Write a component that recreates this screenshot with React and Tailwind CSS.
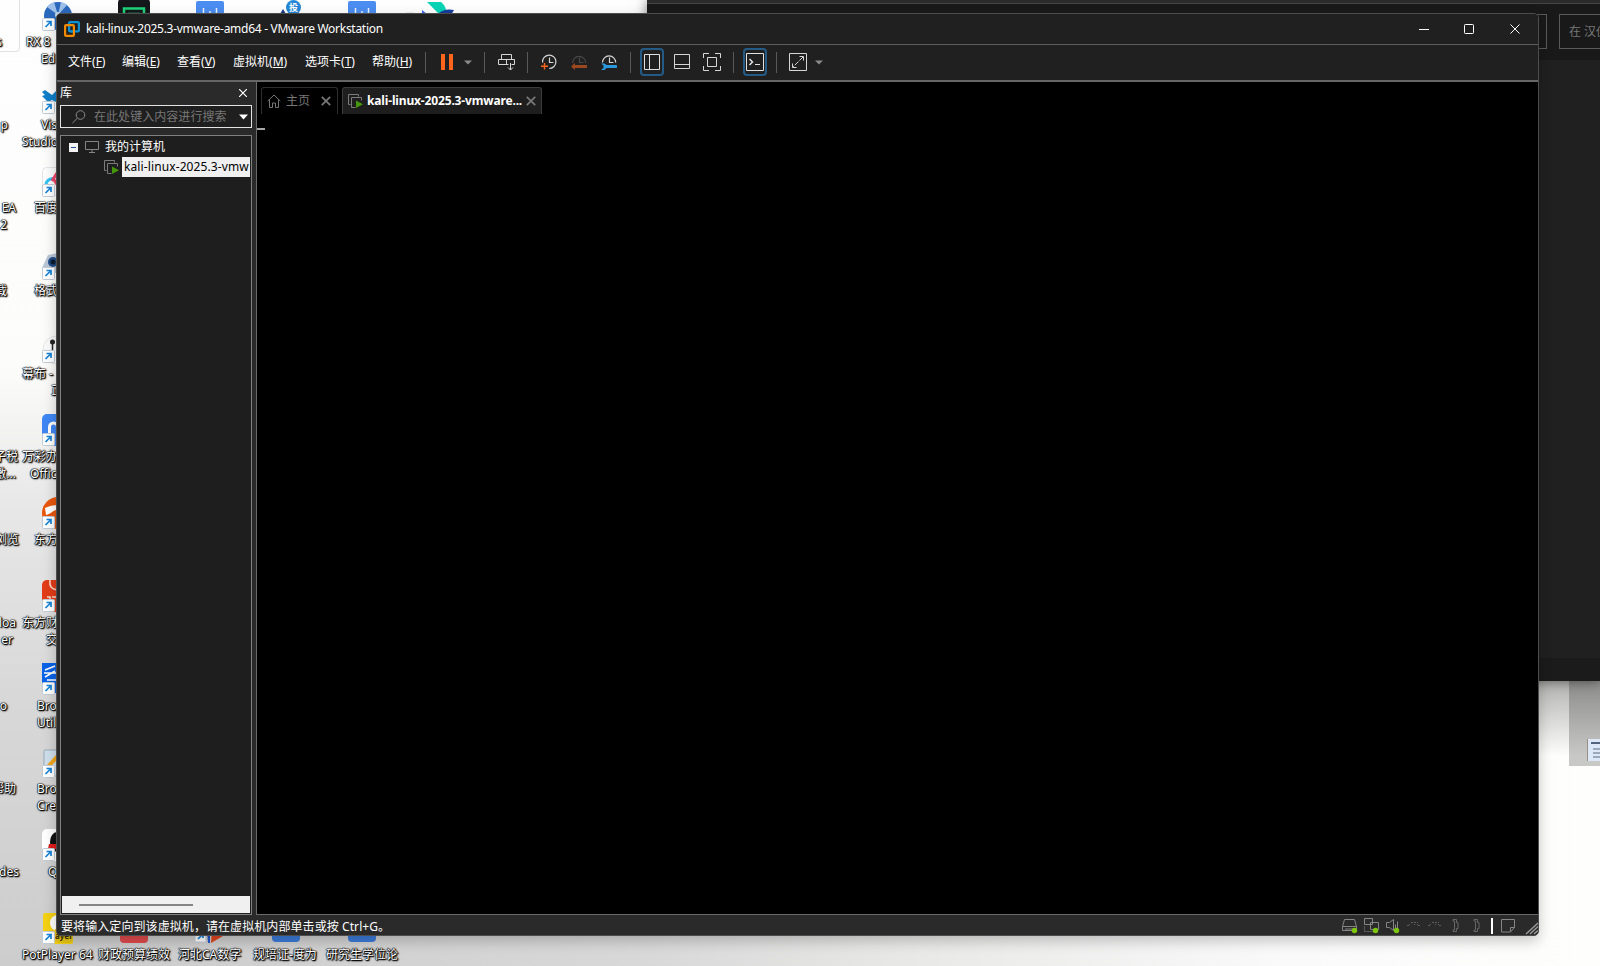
import React from 'react';

const LABEL =
  'absolute whitespace-pre text-[12px] leading-[17px] text-white [text-shadow:0_0_1px_#000,0_0_1px_#000,0_0_1px_#000,1px_1px_1px_#000,1px_1px_2px_#222,0_0_2px_#333]';

const ROW_HEIGHT = 83;

// shortcuts that stick out to the left of the window
const SHORTCUTS = [
  { lines: [['RX 8', 26], ['Ed', 41]], icon: <><circle cx="16" cy="15" r="14" fill="#2b69be" /><path d="M16 14L5 6a14 14 0 0 1 7-5zM16 14L19 1a14 14 0 0 1 6 3z" fill="#9fc0e8" /><circle cx="16" cy="14" r="3" fill="#c4d8ef" /></> },
  { lines: [['Vis', 41], ['Studio', 22]], icon: <path d="M0 8l3-2 7 5 6-6v14l-6-3-4 2L0 12l3-1z" fill="#0e7fc9" /> },
  { lines: [['百度', 34]], icon: <><rect x=".5" y=".5" width="28" height="28" rx="4" fill="#fdfdfd" stroke="#e4e4e4" /><path d="M4 18c0-5 5-7 8-6" fill="none" stroke="#35c3f3" strokeWidth="3" /><path d="M10 14l5-8M11 11l5 8" stroke="#ee4466" strokeWidth="3" /></> },
  { lines: [['格式', 34]], icon: <><path d="M0 18L6 5l10-2v20H0z" fill="#b9c6d6" /><circle cx="11" cy="12" r="5" fill="#224d86" /><circle cx="11" cy="12" r="2.500" fill="#0c1c33" /></> },
  { lines: [['幕布 -', 22], ['正', 51]], icon: <><circle cx="15" cy="17" r="14" fill="#fbfbfb" stroke="#e5e5e5" /><circle cx="10.500" cy="9" r="2.500" fill="#222" /><path d="M10.500 9v9" stroke="#222" strokeWidth="1.500" /></> },
  { lines: [['万彩办', 22], ['Offic', 30]], icon: <><rect y="-2" width="30" height="32" rx="5" fill="#3f87f5" /><path d="M7.500 19V11a4 4 0 0 1 8 0v8" fill="none" stroke="#fff" strokeWidth="3" /></> },
  { lines: [['东方', 34]], icon: <><circle cx="16" cy="14" r="16" fill="#e9570c" /><path d="M3 9c4-2 8-3 14-3v4c-6 1-8 5-13 6z" fill="#fff" /></> },
  { lines: [['东方财', 22], ['交', 46]], icon: <><rect y="-2" width="30" height="32" rx="5" fill="#e23d18" /><path d="M8-2c-1 7 2 9 7 10M5 15h3v3M10 15h5" fill="none" stroke="#ffd6c8" strokeWidth="1.500" /></> },
  { lines: [['Bro', 37], ['Util', 37]], icon: <><rect y="-2" width="30" height="30" fill="#0a63e8" /><path d="M3 5l10-4M2 8h12M3 12l10-6M5 15h9" stroke="#fff" strokeWidth="1.500" /></> },
  { lines: [['Bro', 37], ['Cre', 37]], icon: <><rect x="2" y="2" width="24" height="26" rx="1" fill="#cfdfec" stroke="#9aabb9" /><path d="M5 17l9-10 3 3-9 9z" fill="#f2a71b" /></> },
  { lines: [['Q', 48]], icon: <><rect y="-2" width="30" height="32" rx="5" fill="#fff" /><ellipse cx="15" cy="11" rx="7" ry="10" fill="#111" /><path d="M7 13h10v5H6z" fill="#e01b1b" /></> },
  { lines: [['PotPlayer 64', 22]], icon: <><rect x="1" y="-1" width="30" height="31" rx="2" fill="#f5d214" /><circle cx="16" cy="9" r="8" fill="#fff" /></> },
];

// right aligned tails of the first icon column: [text, row, line, right edge]
const TAILS = [
  ['s', 0, 0, 2],
  ['p', 1, 0, 8],
  ['EA', 2, 0, 16],
  ['2', 2, 1, 7],
  ['载', 3, 0, 7],
  ['子税', 5, 0, 18],
  ['激...', 5, 1, 16],
  ['浏览', 6, 0, 19],
  ['loa', 7, 0, 16],
  ['er', 7, 1, 13],
  ['o', 8, 0, 7],
  ['帮助', 9, 0, 16],
  ['des', 10, 0, 19],
];

const BOTTOM_LABELS = [
  ['财政预算绩效', 98],
  ['河北CA数字', 178],
  ['规培证-度为', 253],
  ['研究生学位论', 326],
];

const MENUS = [
  ['文件', 'F', 54],
  ['编辑', 'E', 55],
  ['查看', 'V', 56],
  ['虚拟机', 'M', 72],
  ['选项卡', 'T', 67],
  ['帮助', 'H', 42],
];

function Desktop() {
  return (
    <div className="absolute inset-0 overflow-hidden bg-[linear-gradient(180deg,#fefefe_0%,#fcfcfb_38%,#e8e8e8_52%,#d8d8d8_72%,#cdcdcd_100%)]">
      <div className="absolute bottom-0 right-0 h-[500px] w-[1540px] bg-[linear-gradient(90deg,#cbcbcb_0%,#d8d8d8_38%,#e8e8e7_55%,#fafafa_80%,#fefefd_100%)]" />
      <div className="absolute -left-2 -top-2 h-[60px] w-[28px] rounded border border-[#e2e2e2]" />

      {SHORTCUTS.map((s, i) => (
        <div key={i}>
          <svg className="absolute left-[42px] h-[30px] w-8 overflow-visible" style={{ top: 1 + i * ROW_HEIGHT }} viewBox="0 0 32 30">
            {s.icon}
            <rect x=".5" y="17.500" width="12" height="12" rx="1" fill="#fff" stroke="#c3cbd6" />
            <path d="M3.500 26L8.500 21M4.500 20.500h4.500v4.500" fill="none" stroke="#1583d8" strokeWidth="1.700" />
          </svg>
          {s.lines.map(([text, left], n) => (
            <span key={text} className={LABEL} style={{ left, top: 33 + i * ROW_HEIGHT + n * 17 }}>{text}</span>
          ))}
        </div>
      ))}
      {TAILS.map(([text, row, line, right]) => (
        <span key={text + row} className={LABEL} style={{ right: 1600 - right, top: 33 + row * ROW_HEIGHT + line * 17 }}>{text}</span>
      ))}

      {/* icons peeking out above the window */}
      <svg className="absolute left-[118px] top-0 h-4 w-8" viewBox="0 0 32 16">
        <rect y="-3" width="32" height="30" rx="6" fill="#15171a" />
        <path d="M6 16V8.500h20V16M10 14h12" fill="none" stroke="#1ed37a" strokeWidth="2.500" />
      </svg>
      {[196, 348].map((left) => (
        <svg key={left} className="absolute top-0 h-4 w-7" style={{ left }} viewBox="0 0 28 16">
          <rect y="1" width="28" height="20" rx="2" fill="#4b8df0" />
          <path d="M7.500 8v8M14 11v5M20.500 8v8" stroke="#e8f1ff" strokeWidth="1.500" />
        </svg>
      ))}
      <svg className="absolute left-[278px] top-0 h-4 w-6" viewBox="0 0 24 16">
        <path d="M2 14l3-5 3 5z" fill="#193a86" />
        <circle cx="15.500" cy="7.500" r="7.500" fill="#2487d8" />
        <text x="15.500" y="11" fontSize="9" fontWeight="700" fill="#fff" textAnchor="middle" fontFamily="Noto Sans CJK SC">投</text>
      </svg>
      <svg className="absolute left-[404px] top-0 h-4 w-[52px]" viewBox="0 0 52 16">
        <path d="M2 13h8" stroke="#e3e6f0" strokeWidth="1.500" />
        <path d="M18 10l5 4h-5z" fill="#3566f0" />
        <path d="M23 2h14q4 3 5 8l-7 4z" fill="#08d4b5" />
        <path d="M34 14q6-6 16-4l-3 5z" fill="#153d9c" />
      </svg>

      {/* bottom row */}
      <span className="absolute left-[55px] top-[929px] h-[14px] w-[18px] rounded-b-sm bg-[#e9c717] text-[8px] font-bold leading-[14px] text-[#3b2e0a]">ayer</span>
      <div className="absolute left-[120px] top-[929px] h-[14px] w-7 rounded-b-sm bg-[#e04a4c]" />
      <svg className="absolute left-[194px] top-[930px] h-[13px] w-[30px]" viewBox="0 0 30 13">
        <rect x="1" y="-2" width="11" height="14" fill="#fff" stroke="#c3cbd6" />
        <path d="M4 9l4-4M5 4h4v4" fill="none" stroke="#1583d8" strokeWidth="1.700" />
        <path d="M13 0h3v13h-2z" fill="#2456cf" />
        <path d="M18 0h8l3 6-12 7z" fill="#e2441e" />
      </svg>
      <div className="absolute left-[272px] top-[929px] h-[13px] w-7 rounded-b-sm bg-[#3b7bd9]" />
      <div className="absolute left-[348px] top-[929px] h-[13px] w-7 rounded-b-sm bg-[#3b7bd9]" />
      {BOTTOM_LABELS.map(([text, left]) => (
        <span key={text} className={LABEL} style={{ left, top: 946 }}>{text}</span>
      ))}
    </div>
  );
}

function BackWindow() {
  return (
    <>
      <div className="absolute left-[1569px] top-[681px] h-[85px] w-[31px] bg-[#c8c8c6]" />
      <div className="absolute left-[1538px] top-[681px] h-[75px] w-[62px] bg-linear-to-b from-black/30 to-transparent" />
      <div className="absolute left-[1587px] top-[739px] flex h-[22px] w-[13px] flex-col gap-[2px] border-l border-[#9a8f80] bg-[#dce8f7] pl-[3px] pt-[3px]">
        <div className="h-[2px] shrink-0 bg-[#50627c]" />
        <div className="ml-[2px] mt-[2px] h-[2px] shrink-0 bg-[#9aa9bb]" />
        <div className="ml-[2px] h-[2px] shrink-0 bg-[#9aa9bb]" />
        <div className="ml-[2px] h-[2px] shrink-0 bg-[#9aa9bb]" />
      </div>
      <div className="absolute left-[647px] top-0 flex h-[681px] w-[953px] flex-col bg-[#202020] shadow-[0_0_12px_rgba(0,0,0,0.5)]">
        <div className="h-1 shrink-0 border-b border-[#444] bg-[#2b2b2b]" />
        <div className="flex h-14 shrink-0 overflow-hidden bg-[#191919] pt-[10px]">
          <div className="h-[35px] w-[900px] shrink-0 border border-[#5a5a5a]" />
          <div className="ml-3 h-[35px] w-[60px] shrink-0 overflow-hidden whitespace-nowrap border border-[#5a5a5a] pl-[9px] text-[12px] leading-[34px] text-[#777]">在 汉仪</div>
        </div>
        <div className="grow" />
        <div className="h-[23px] bg-[#1b1b1b]" />
      </div>
    </>
  );
}

function TitleBar() {
  return (
    <div className="flex h-[31px] shrink-0 items-center border-b border-[#5e5e5e] bg-[#202020] pl-[7px]">
      <svg className="h-4 w-4" viewBox="0 0 16 16" fill="none" strokeWidth="2.200">
        <rect x="5.100" y="1.100" width="9.800" height="9.300" rx="1" stroke="#0d91d4" />
        <rect x="1.100" y="4.100" width="8.800" height="10.800" rx="1" stroke="#f38b00" />
        <path d="M5.100 8.500V6.500M7 10.400h1.500" stroke="#0d91d4" />
      </svg>
      <span className="ml-[6px] w-[297px] whitespace-nowrap text-[12px] tracking-[-0.280px] text-white">kali-linux-2025.3-vmware-amd64 - VMware Workstation</span>
      <svg className="ml-auto mr-[17px] h-[10px] w-[102px]" viewBox="0 0 102 10" fill="none" stroke="#fff">
        <path d="M0 5.500h10" />
        <rect x="45.500" y=".5" width="9" height="9" rx=".8" />
        <path d="M91.500.5l9 9M100.500.5l-9 9" />
      </svg>
    </div>
  );
}

function Separator() {
  return <div className="mt-px h-[21px] w-px shrink-0 bg-[#595959]" />;
}

function Caret() {
  return (
    <svg className="-mb-px h-[5px] w-2 shrink-0" viewBox="0 0 8 5"><path d="M0 .5h8L4 4.500z" fill="#8a8a8a" /></svg>
  );
}

function Toggle({ children }) {
  return (
    <div className="ml-[9px] flex h-[28px] w-[24px] shrink-0 items-center justify-center rounded-sm border-2 border-[#235b86]">
      {children}
    </div>
  );
}

function MenuBar() {
  return (
    <div className="flex h-[37px] shrink-0 items-center border-b-2 border-[#666] bg-[#202020] pb-px pl-[11px]">
      {MENUS.map(([name, key, width]) => (
        <span key={key} className="-mt-px shrink-0 whitespace-nowrap text-[12px] leading-4 text-white" style={{ width }}>
          {name}(<u className="underline-offset-1">{key}</u>)
        </span>
      ))}
      <div className="ml-[11px]"><Separator /></div>
      <svg className="ml-[15px] h-4 w-3" viewBox="0 0 12 16"><path d="M0 0h4v16H0zM8 0h4v16H8z" fill="#ff661c" /></svg>
      <div className="ml-[11px] flex"><Caret /></div>
      <div className="ml-3"><Separator /></div>
      <svg className="-mb-px ml-[13px] h-[17px] w-[17px]" viewBox="0 0 17 17" fill="none" stroke="#d6d6d6">
        <path d="M3.500 5.500v-5h10v5M.5 5.500h16v5h-3M.5 5.500v5h10M8.500 5.500v5M12.500 9v7M10 13.500l2.500 2.500 2.500-2.500" />
      </svg>
      <div className="ml-3"><Separator /></div>
      <svg className="ml-[13px] h-4 w-4" viewBox="0 0 16 16">
        <g fill="none" stroke="#d6d6d6" strokeWidth="1.200"><path d="M1.600 8.500a6.700 6.700 0 1 1 6.600 6" /><path d="M8.500 3.500v5h4" /></g>
        <path d="M0 12.200h7M3.500 9v6.500" stroke="#ff661c" strokeWidth="1.400" />
      </svg>
      <svg className="ml-[14px] h-4 w-4" viewBox="0 0 16 16">
        <g fill="none" stroke="#484848" strokeWidth="1.200"><path d="M1.500 9a6.600 6.600 0 1 1 13.200 0" /><path d="M8.500 3.500v5h4" /></g>
        <path d="M0 12.500l4-3.500v2h12v3H4v2z" fill="#9b4720" />
      </svg>
      <svg className="ml-[14px] h-4 w-4" viewBox="0 0 16 16">
        <g fill="none" stroke="#d6d6d6" strokeWidth="1.200"><path d="M1.500 8.500a6.600 6.600 0 1 1 13.200 0" /><path d="M8.500 3.500v5h4" /></g>
        <path d="M0 9.500h3.500L5.500 11H15a1.200 1.200 0 0 1 0 3H5.500l-2 2H0l2.500-2v-2.500z" fill="#2c98dc" />
      </svg>
      <div className="ml-[13px]"><Separator /></div>
      <Toggle>
        <svg className="h-4 w-4 shrink-0" viewBox="0 0 16 16" fill="none" stroke="#e2e2e2"><path d="M.5.5h15v15H.5zM5.500.5v15" /></svg>
      </Toggle>
      <svg className="ml-[10px] h-4 w-4" viewBox="0 0 16 16" fill="none" stroke="#d6d6d6"><path d="M.5.5h15v14H.5zM.5 10.500h15" /></svg>
      <svg className="ml-[13px] h-[18px] w-[18px]" viewBox="0 0 18 18" fill="none" stroke="#d6d6d6">
        <path d="M.5 5V.5H6M12 .5h5.500V5M17.500 13v4.500H12M6 17.500H.5V13M4.500 4.500h9v9h-9z" />
      </svg>
      <div className="ml-3"><Separator /></div>
      <Toggle>
        <svg className="h-[18px] w-[18px] shrink-0" viewBox="0 0 18 18" fill="none" stroke="#e2e2e2">
          <path d="M.5.5h17v17H.5zM9 11.500h5" />
          <path d="M3.500 6l3 3-3 3" strokeWidth="1.500" />
        </svg>
      </Toggle>
      <div className="ml-[9px]"><Separator /></div>
      <svg className="ml-3 h-[18px] w-[18px]" viewBox="0 0 18 18" fill="none" stroke="#d6d6d6">
        <path d="M.5.5h17v17H.5zM10.500 3.500h4v4M3.500 10.500v4h4" />
        <path d="M14 4L4 14" strokeDasharray="5 1.500" />
      </svg>
      <div className="ml-2 flex"><Caret /></div>
    </div>
  );
}

function VmIcon() {
  return (
    <svg className="h-[14px] w-[15px] shrink-0" viewBox="0 0 15 14">
      <path d="M2.500 10.500h-2V.5h10v2" fill="none" stroke="#7b7b7b" />
      <path d="M7.500 13.500h-4v-10h10v3" fill="none" stroke="#7b7b7b" />
      <path d="M8 6.500l7 3.700L8 14z" fill="#45960b" />
    </svg>
  );
}

function Library() {
  return (
    <div className="flex w-[199px] shrink-0 flex-col bg-[#2a2a2a] pl-[3px]">
      <div className="flex h-[23px] shrink-0 items-center pb-[2px] text-[12px] text-white">
        <span>库</span>
        <svg className="ml-auto mr-[9px] h-2 w-2" viewBox="0 0 8 8"><path d="M0 0l8 8M8 0L0 8" stroke="#fff" strokeWidth="1.200" /></svg>
      </div>
      <div className="flex h-[23px] w-[192px] shrink-0 items-center border border-[#e4e4e4] bg-[#1f1f1f] pl-[11px] pr-[3px]">
        <svg className="h-[14px] w-[14px] shrink-0" viewBox="0 0 14 14" fill="none" stroke="#8a8a8a"><circle cx="8.500" cy="5" r="4.300" /><path d="M5.300 8.300L.5 13" /></svg>
        <span className="ml-2 whitespace-nowrap text-[12px] text-[#777] tracking-[0.050px]">在此处键入内容进行搜索</span>
        <svg className="ml-auto h-[6px] w-[9px] shrink-0" viewBox="0 0 9 6"><path d="M0 .5h9L4.500 5.500z" fill="#fff" /></svg>
      </div>
      <div className="mt-[7px] flex w-[192px] grow flex-col border border-[#808080] bg-[#1e1e1e]">
        <div className="flex h-[21px] items-center pl-2 pt-px">
          <div className="flex h-[9px] w-[9px] items-center justify-center bg-[#f3f3f3]">
            <div className="h-px w-[5px] bg-[#27509b]" />
          </div>
          <svg className="ml-[7px] h-3 w-[14px]" viewBox="0 0 14 12" fill="none" stroke="#858585"><path d="M.5.5h13v8H.5zM7 8.500v3M4 11.500h6" /></svg>
          <span className="ml-[6px] text-[12px] leading-4 text-white">我的计算机</span>
        </div>
        <div className="flex h-5 items-center pl-[43px]">
          <VmIcon />
          <div className="ml-[3px] mr-px h-5 grow overflow-hidden bg-[#f0f0f0] pl-[2px] text-[12px] leading-5 text-black">
            <span className="block w-[125px] overflow-hidden whitespace-nowrap tracking-[0.110px]">kali-linux-2025.3-vmware-amd64</span>
          </div>
        </div>
        <div className="grow" />
        <div className="mx-px mb-px flex h-[17px] items-center bg-[#f0f0f0] pl-[17px]">
          <div className="h-[2px] w-[114px] bg-[#858585]" />
        </div>
      </div>
    </div>
  );
}

function TabClose() {
  return (
    <svg className="h-[10px] w-[10px] shrink-0" viewBox="0 0 10 10"><path d="M.8.8l8.400 8.400M9.200.8L.8 9.200" stroke="#777" strokeWidth="1.800" /></svg>
  );
}

function Console() {
  return (
    <div className="flex grow flex-col border-b border-l border-[#6a6a6a] bg-black">
      <div className="mt-[5px] flex h-[27px] gap-1 pl-1">
        <div className="flex w-[77px] items-center rounded-t-[3px] border border-b-0 border-[#2e2e2e] pl-[5px]">
          <svg className="h-[14px] w-[14px]" viewBox="0 0 14 14" fill="none" stroke="#777"><path d="M.7 7L7 1l6.300 6M2.500 5.500v8h3V9h3v4.500h3v-8" /></svg>
          <span className="ml-[5px] text-[12px] text-[#777]">主页</span>
          <div className="ml-[11px] flex"><TabClose /></div>
        </div>
        <div className="flex w-[200px] items-center rounded-t-[3px] border border-b-0 border-[#3c3c3c] bg-[#1e1e1e] pl-[5px]">
          <VmIcon />
          <span className="ml-1 w-[156px] whitespace-nowrap text-[12px] font-bold tracking-[-0.150px] text-white">kali-linux-2025.3-vmware...</span>
          <div className="ml-[3px] flex"><TabClose /></div>
        </div>
      </div>
      {/* guest text cursor */}
      <div className="mt-[14px] h-[2px] w-2 bg-[#a8a8a8]" />
    </div>
  );
}

function StatusBar() {
  return (
    <div className="flex h-[20px] shrink-0 items-center bg-[#2a2a2a] pl-1">
      <span className="whitespace-nowrap pt-[3px] text-[12px] leading-4 tracking-[0.080px] text-white">要将输入定向到该虚拟机，请在虚拟机内部单击或按 Ctrl+G。</span>
      <svg className="ml-auto mt-[2px] h-[17px] w-[197px]" viewBox="0 0 197 17" fill="none" stroke="#858585">
        <path d="M3.500 1.500h10l2 7v4H1.500v-4zM1.500 8.500h14M4 11h8" />
        <path d="M23.500.5h8v6h-8zM29.500 4.500h8v7h-8z" fill="#2a2a2a" />
        <path d="M23.500 8.500v5h9" strokeDasharray="1 1" />
        <path d="M45.500 4.500h3l4-3v11l-4-3h-3zM54.500 6.500v6M56.500 3.500v8" />
        <g stroke="#5c5c5c">
          <path d="M70 4.500h2M73 4.500h2M76 4.500h1M66 7.500h2M68 6.500h1M73 6.500h1M76 6.500h1M77 7.500h2" />
          <path d="M91 4.500h2M94 4.500h2M97 4.500h1M87 7.500h2M89 6.500h1M94 6.500h1M97 6.500h1M98 7.500h2" />
        </g>
        <path d="M112 1.500h3.500v3h1.500v6h-1.500v3H112v-1.500h1.500v-9H112zM133 1.500h3.500v3h1.500v6h-1.500v3H133v-1.500h1.500v-9H133z" stroke="#666" />
        <path d="M151 0v16" stroke="#fff" strokeWidth="2" />
        <path d="M160.500 1.500h13v8l-4 4.500h-9zM173.500 9.500h-4v4" />
        <path d="M185 16l12-11M189 16l8-7.500M193 16l4-3.500" stroke="#9a9a9a" strokeWidth="1.400" />
        <g fill="#7cc60d" stroke="none"><circle cx="13.500" cy="12.500" r="2.700" /><circle cx="34.500" cy="12.500" r="2.700" /><circle cx="55.500" cy="12.500" r="2.700" /></g>
      </svg>
    </div>
  );
}

export default function App() {
  return (
    <div className="relative h-[966px] w-[1600px] overflow-hidden font-['Noto_Sans','Noto_Sans_CJK_SC',sans-serif]">
      <Desktop />
      <BackWindow />
      <div className="absolute left-[56px] top-[13px] flex h-[923px] w-[1483px] flex-col overflow-hidden rounded-[5px] border border-[#4d4d4d] bg-[#202020] shadow-[0_5px_14px_rgba(0,0,0,0.22)]">
        <TitleBar />
        <MenuBar />
        <div className="flex grow">
          <Library />
          <Console />
        </div>
        <StatusBar />
      </div>
    </div>
  );
}
